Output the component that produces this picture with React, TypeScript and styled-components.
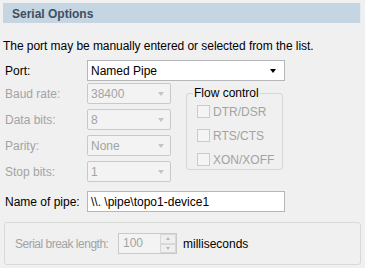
import * as React from 'react';
import styled, { createGlobalStyle } from 'styled-components';

const GlobalStyle = createGlobalStyle`
  body {
    margin: 0;
    background-color: #f0f0f0;
    font-family: "Liberation Sans", Arial, sans-serif;
    font-size: 12px;
    color: #000000;
  }
`;

const Page = styled.div`
  width: 365px;
  height: 268px;
  padding: 3px 4px 0px 3px;
  box-sizing: border-box;
  overflow: hidden;
`;

const Header = styled.div`
  height: 20px;
  background-color: #c6d5e2;
  border-right: 1px solid #e4ebf1;

  padding-left: 9px;
  padding-top: 1px;
  box-sizing: border-box;

  display: flex;
  align-items: center;

  font-weight: bold;
  color: #3e4f60;
`;

const Intro = styled.p`
  margin: 16px 0px 7px 0px;
  line-height: 14px;
  letter-spacing: -0.05px;
`;

const Row = styled.div<{ $gap?: number }>`
  display: flex;
  align-items: center;
  height: 21px;
  margin-bottom: ${props => props.$gap ?? 5}px;
`;

const Label = styled.span<{ $disabled?: boolean }>`
  width: 82px;
  padding-left: 2px;
  flex-shrink: 0;

  color: ${props => props.$disabled ? "#a3a3a3" : "#000000"};
`;

const Field = styled.div<{ $width: number; $disabled?: boolean }>`
  width: ${props => props.$width}px;
  height: 21px;
  box-sizing: border-box;

  border: 1px solid ${props => props.$disabled ? "#c9c9c9" : "#b4b6ba"};
  border-radius: ${props => props.$disabled ? 2 : 0}px;
  background-color: ${props => props.$disabled ? "#f3f3f3" : "#ffffff"};

  padding-left: 3px;

  display: flex;
  align-items: center;
  justify-content: space-between;

  color: ${props => props.$disabled ? "#a3a3a3" : "#000000"};
`;

const Arrow = styled.span<{ $disabled?: boolean }>`
  width: 0;
  height: 0;
  margin-right: ${props => props.$disabled ? 6 : 8}px;
  margin-top: 1px;

  border-left: 3.5px solid transparent;
  border-right: 3.5px solid transparent;
  border-top: 4px solid ${props => props.$disabled ? "#c4c4c4" : "#000000"};
`;

const Middle = styled.div`
  display: flex;
  margin-bottom: 9px;
`;

const LeftColumn = styled.div`
  display: flex;
  flex-direction: column;
  width: 183px;
`;

const FlowBox = styled.fieldset`
  width: 97px;
  height: 83px;
  box-sizing: border-box;
  margin: 4px 0px 0px 0px;
  padding: 6px 0px 0px 10px;

  border: 1px solid #d6d6d2;
  border-radius: 3px;

  display: flex;
  flex-direction: column;
  gap: 11px;
`;

const Legend = styled.legend`
  padding: 0px 1px;
  margin-left: -4px;
  line-height: 12px;
`;

const Check = styled.label`
  display: flex;
  align-items: center;
  gap: 3px;
  height: 13px;

  color: #a3a3a3;
`;

const Box = styled.span`
  width: 13px;
  height: 13px;
  box-sizing: border-box;

  border: 1px solid #cbcbcb;
  background-color: #f4f4f4;
`;

const BreakBox = styled.div`
  margin-top: 10px;
  margin-left: 1px;
  height: 43px;
  box-sizing: border-box;

  border: 1px solid #d9d9d5;
  border-radius: 3px;

  padding-left: 10px;

  display: flex;
  align-items: center;
`;

const BreakLabel = styled.span`
  width: 103px;
  flex-shrink: 0;
  letter-spacing: -0.5px;
  white-space: nowrap;
  color: #a3a3a3;
`;

const Spin = styled.div`
  width: 59px;
  height: 21px;
  box-sizing: border-box;

  border: 1px solid #c9c9c9;
  background-color: #f3f3f3;

  display: flex;
  justify-content: space-between;

  color: #a3a3a3;
`;

const SpinValue = styled.span`
  padding-left: 4px;
  line-height: 19px;
`;

const SpinButtons = styled.div`
  width: 16px;
  display: flex;
  flex-direction: column;
`;

const SpinButton = styled.span`
  flex: 1;
  border: 1px solid #d8d8d8;
  background-color: #efefef;

  display: flex;
  align-items: center;
  justify-content: center;
`;

const SpinTri = styled.span<{ $up?: boolean }>`
  width: 0;
  height: 0;
  border-left: 2.5px solid transparent;
  border-right: 2.5px solid transparent;
  border-${props => props.$up ? "bottom" : "top"}: 3px solid #b8b8b8;
`;

const Units = styled.span`
  margin-left: 6px;
`;

const options = [
  { label: "Baud rate:", value: "38400" },
  { label: "Data bits:", value: "8" },
  { label: "Parity:", value: "None" },
  { label: "Stop bits:", value: "1" },
];

const flowControls = ["DTR/DSR", "RTS/CTS", "XON/XOFF"];

export const SerialOptions = () => {
  return (
    <Page>
      <Header>Serial Options</Header>
      <Intro>The port may be manually entered or selected from the list.</Intro>

      <Row $gap={2}>
        <Label>Port:</Label>
        <Field $width={198}>
          Named Pipe
          <Arrow />
        </Field>
      </Row>

      <Middle>
        <LeftColumn>
          {
            options.map((opt, index) => {
              return (
                <Row key={index} $gap={index === options.length - 1 ? 0 : 5}>
                  <Label $disabled>{opt.label}</Label>
                  <Field $width={84} $disabled>
                    {opt.value}
                    <Arrow $disabled />
                  </Field>
                </Row>);
            })
          }
        </LeftColumn>
        <FlowBox>
          <Legend>Flow control</Legend>
          {
            flowControls.map((name) => {
              return (
                <Check key={name}>
                  <Box />
                  {name}
                </Check>);
            })
          }
        </FlowBox>
      </Middle>

      <Row $gap={0}>
        <Label>Name of pipe:</Label>
        <Field $width={198}>\\. \pipe\topo1-device1</Field>
      </Row>

      <BreakBox>
        <BreakLabel>Serial break length:</BreakLabel>
        <Spin>
          <SpinValue>100</SpinValue>
          <SpinButtons>
            <SpinButton><SpinTri $up /></SpinButton>
            <SpinButton><SpinTri /></SpinButton>
          </SpinButtons>
        </Spin>
        <Units>milliseconds</Units>
      </BreakBox>
    </Page>
  );
};

const App = () => (
  <>
    <GlobalStyle />
    <SerialOptions />
  </>
);

export default App;
